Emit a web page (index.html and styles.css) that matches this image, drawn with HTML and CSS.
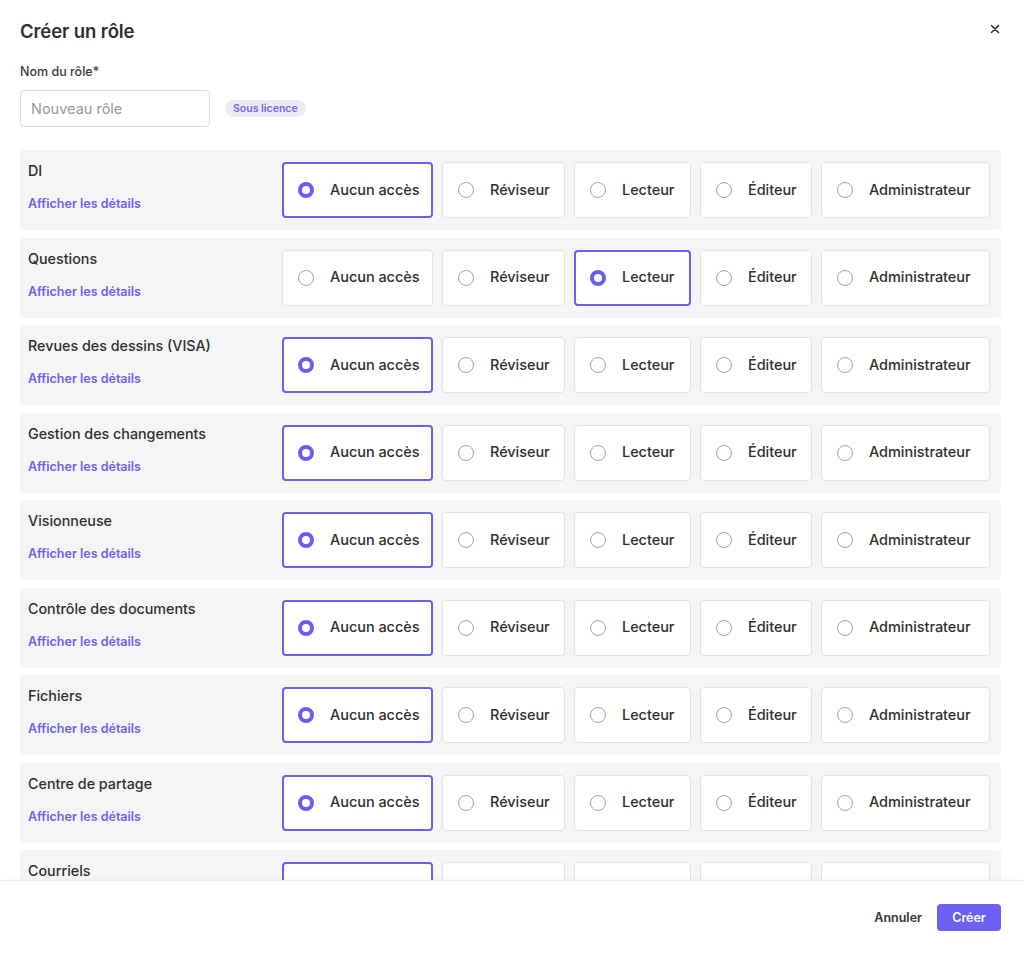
FILE: index.html
```html
<!DOCTYPE html>
<html lang="fr">
<head>
<meta charset="utf-8">
<title>Créer un rôle</title>
<link rel="stylesheet" href="styles.css">
</head>
<body>
<div class="modal">
  <div class="body">
    <div class="header">
      <h1 class="title">Créer un rôle</h1>
      <button class="close" aria-label="Fermer">
        <svg width="10" height="10" viewBox="0 0 10 10"><path d="M1.5 1.5 L8.5 8.5 M8.5 1.5 L1.5 8.5" stroke="#333" stroke-width="1.6" stroke-linecap="round"/></svg>
      </button>
    </div>
    <label class="field-label">Nom du rôle*</label>
    <div class="name-row">
      <input class="name-input" type="text" placeholder="Nouveau rôle">
      <span class="badge">Sous licence</span>
    </div>
    <div class="rows" id="rows"></div>
  </div>
  <div class="footer">
    <button class="btn-cancel">Annuler</button>
    <button class="btn-primary">Créer</button>
  </div>
</div>
<script src="app.js"></script>
</body>
</html>
```
FILE: app.js
```js
const modules = [
  ["DI", 0], ["Questions", 2], ["Revues des dessins (VISA)", 0],
  ["Gestion des changements", 0], ["Visionneuse", 0], ["Contrôle des documents", 0],
  ["Fichiers", 0], ["Centre de partage", 0], ["Courriels", 0]
];
const opts = ["Aucun accès", "Réviseur", "Lecteur", "Éditeur", "Administrateur"];
const host = document.getElementById("rows");
modules.forEach(([name, sel], r) => {
  const row = document.createElement("div");
  row.className = "row";
  const info = document.createElement("div");
  info.className = "info";
  info.innerHTML = '<div class="mod-name"></div>' + (r < modules.length - 1 ? '<a class="details" href="#">Afficher les détails</a>' : '');
  info.querySelector(".mod-name").textContent = name;
  row.appendChild(info);
  const group = document.createElement("div");
  group.className = "options";
  opts.forEach((o, i) => {
    const c = document.createElement("div");
    c.className = "opt opt-" + i + (i === sel ? " selected" : "");
    if (r < modules.length - 1) {
      c.innerHTML = '<span class="radio"></span><span class="opt-label"></span>';
      c.querySelector(".opt-label").textContent = o;
    }
    group.appendChild(c);
  });
  row.appendChild(group);
  host.appendChild(row);
});
```
FILE: styles.css
```css
* { box-sizing: border-box; }
html, body { margin: 0; padding: 0; background: #fff; }
body {
  font-family: Inter, "Noto Sans", "Liberation Sans", sans-serif;
  color: #333;
  width: 1024px;
  height: 953px;
  overflow: hidden;
}
.modal { display: flex; flex-direction: column; height: 953px; }
.body {
  height: 880px;
  overflow: hidden;
  padding: 18px 23px 0 20px;
}
.header { display: flex; justify-content: space-between; align-items: center; }
.title { margin: 0; font-size: 18.5px; line-height: 26px; font-weight: 600; color: #2f2f2f; letter-spacing: -0.1px; }
.close {
  border: 0; background: none; padding: 0; width: 14px; height: 14px;
  display: flex; align-items: center; justify-content: center; margin-right: -1px; margin-top: -4px;
}
.field-label {
  display: block; margin-top: 19px; font-size: 12.5px; line-height: 18px; font-weight: 500; color: #3a3a3a;
}
.name-row { display: flex; align-items: center; margin-top: 9px; gap: 15px; }
.name-input {
  width: 190px; height: 37px; border: 1px solid #dcdcdc; border-radius: 4px;
  padding: 0 10px; font: inherit; font-size: 14.5px; color: #333; outline: none;
}
.name-input::placeholder { color: #999; }
.badge {
  background: #ebebf4; color: #7666ee; font-size: 10.5px; font-weight: 600;
  line-height: 17px; padding: 0 8px; border-radius: 9px;
}
.rows { margin-top: 23px; display: flex; flex-direction: column; gap: 7.5px; }
.row {
  background: #f5f5f5; border-radius: 4px; height: 80px; flex: none;
  display: flex; justify-content: space-between; padding: 12px 11px 12px 8px;
}
.info { margin-top: -1px; }
.mod-name { font-size: 14.3px; line-height: 20px; font-weight: 500; color: #2f2f2f; }
.details {
  display: block; margin-top: 14px; font-size: 12.5px; line-height: 18px; font-weight: 600;
  color: #6e60f0; text-decoration: none;
}
.options { display: flex; gap: 9px; }
.opt {
  height: 56px; background: #fff; border: 1px solid #e2e2e2; border-radius: 4px;
  display: flex; align-items: center; padding: 0 15px 2px 15px; gap: 16px;
}
.opt-0 { width: 151px; }
.opt-1 { width: 123px; }
.opt-2 { width: 117px; }
.opt-3 { width: 112px; }
.opt-4 { width: 169px; }
.opt.selected { border: 2px solid #6c5ff3; padding-left: 14px; }
.radio {
  width: 16px; height: 16px; border-radius: 50%; border: 1.5px solid #a3a3a3; flex: none; background: #fff;
  margin-top: 2px;
}
.selected .radio { border: 4.5px solid #6a5cf4; }
.opt-label { font-size: 14.5px; font-weight: 500; color: #2f2f2f; white-space: nowrap; letter-spacing: -0.05px; }
.footer {
  height: 73px; border-top: 1px solid #ededed; display: flex; align-items: center;
  justify-content: flex-end; padding: 0 23px 0 0; gap: 15px;
  box-shadow: 0 -1px 2px rgba(0,0,0,0.03);
}
.btn-cancel {
  border: 0; background: none; font: inherit; font-size: 12.5px; font-weight: 600; color: #333; padding: 0;
}
.btn-primary {
  border: 0; background: #6c5ff3; color: #fff; font: inherit; font-size: 12.5px; font-weight: 600;
  width: 64px; height: 27px; border-radius: 4px;
}
```
